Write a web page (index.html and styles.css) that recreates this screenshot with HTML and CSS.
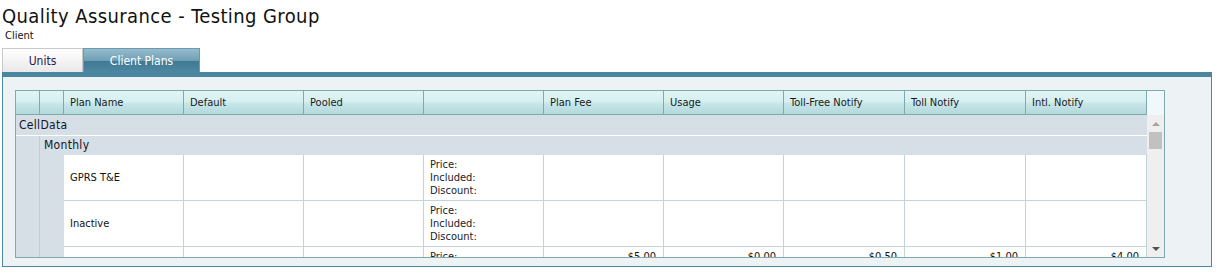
FILE: index.html
```html
<!DOCTYPE html>
<html>
<head>
<meta charset="utf-8">
<link rel="stylesheet" href="styles.css">
</head>
<body>
<h1 class="title">Quality Assurance - Testing Group</h1>
<div class="subtitle">Client</div>
<div class="tabs">
  <div class="tab">Units</div>
  <div class="tab active">Client Plans</div>
</div>
<div class="panel">
  <div class="grid">
    <div class="head">
      <div class="hcells">
        <div class="hc"></div>
        <div class="hc"></div>
        <div class="hc">Plan Name</div>
        <div class="hc">Default</div>
        <div class="hc">Pooled</div>
        <div class="hc"></div>
        <div class="hc">Plan Fee</div>
        <div class="hc">Usage</div>
        <div class="hc">Toll-Free Notify</div>
        <div class="hc">Toll Notify</div>
        <div class="hc">Intl. Notify</div>
      </div>
      <div class="hscroll"></div>
    </div>
    <div class="body">
      <div class="main">
        <div class="group g1">CellData</div>
        <div class="nest">
          <div class="indent i1"></div>
          <div class="nest-col">
            <div class="group g2">Monthly</div>
            <div class="nest">
              <div class="indent i2"></div>
              <div class="rows">
                <div class="row">
                  <div class="c name">GPRS T&amp;E</div>
                  <div class="c"></div>
                  <div class="c"></div>
                  <div class="c labels">Price:<br>Included:<br>Discount:</div>
                  <div class="c"></div>
                  <div class="c"></div>
                  <div class="c"></div>
                  <div class="c"></div>
                  <div class="c"></div>
                </div>
                <div class="row">
                  <div class="c name">Inactive</div>
                  <div class="c"></div>
                  <div class="c"></div>
                  <div class="c labels">Price:<br>Included:<br>Discount:</div>
                  <div class="c"></div>
                  <div class="c"></div>
                  <div class="c"></div>
                  <div class="c"></div>
                  <div class="c"></div>
                </div>
                <div class="row">
                  <div class="c name"></div>
                  <div class="c"></div>
                  <div class="c"></div>
                  <div class="c labels">Price:<br>Included:<br>Discount:</div>
                  <div class="c num">$5.00</div>
                  <div class="c num">$0.00</div>
                  <div class="c num">$0.50</div>
                  <div class="c num">$1.00</div>
                  <div class="c num">$4.00</div>
                </div>
              </div>
            </div>
          </div>
        </div>
      </div>
      <div class="vscroll">
        <div class="arrow up"></div>
        <div class="thumb"></div>
        <div class="spacer"></div>
        <div class="arrow down"></div>
      </div>
    </div>
  </div>
</div>
</body>
</html>
```

FILE: styles.css
```css
html, body {
  margin: 0;
  padding: 0;
  background: #ffffff;
}
body {
  font-family: "DejaVu Sans Condensed", "DejaVu Sans", sans-serif;
  font-stretch: condensed;
  color: #111;
  width: 1219px;
  height: 277px;
  overflow: hidden;
}
.title {
  margin: 4px 0 0 2px;
  font-size: 20px;
  font-weight: normal;
  line-height: 24px;
  letter-spacing: 0.4px;
  color: #111;
}
.subtitle {
  margin: 1px 0 0 5px;
  font-size: 11px;
  line-height: 13px;
  color: #111;
}
.tabs {
  display: flex;
  margin: 6px 0 0 2px;
  height: 24px;
}
.tab {
  box-sizing: border-box;
  width: 81px;
  height: 24px;
  border: 1px solid #c9c9c9;
  border-bottom: none;
  background: linear-gradient(#ffffff, #f4f4f4 50%, #e9e9e9);
  font-size: 12px;
  line-height: 24px;
  text-align: center;
  color: #2a2050;
}
.tab.active {
  width: 117px;
  border-color: #6b9ab0;
  background: linear-gradient(#97bccd, #6f9fb6 50%, #3f7994 52%, #4c86a1);
  color: #ffffff;
}
.panel {
  box-sizing: border-box;
  margin: 0 7px 0 2px;
  height: 195px;
  border: 1px solid #4d88a2;
  border-top: 5px solid #4b86a0;
  background: #edf2f5;
  padding: 13px 0 0 12px;
}
.grid {
  box-sizing: border-box;
  width: 1150px;
  height: 168px;
  border: 1px solid #80a9ae;
  background: #ffffff;
  display: flex;
  flex-direction: column;
}
.head {
  display: flex;
  height: 24px;
}
.hcells {
  display: grid;
  grid-template-columns: 24px 24px repeat(6, 120px) repeat(3, 121px);
  height: 24px;
  box-sizing: border-box;
  border-bottom: 1px solid #80a9ae;
  background: linear-gradient(#e1f4f5, #d6eff1 45%, #c6e6e8 55%, #b3d9dc);
}
.hc {
  box-sizing: border-box;
  border-right: 1px solid #80a9ae;
  font-size: 11px;
  line-height: 23px;
  padding-left: 6px;
  color: #1a1a1a;
  white-space: nowrap;
  overflow: hidden;
}
.hscroll {
  width: 17px;
  height: 24px;
  background: #f1f8fb;
}
.body {
  display: flex;
  height: 142px;
  overflow: hidden;
}
.main {
  width: 1131px;
  height: 142px;
  overflow: hidden;
  display: flex;
  flex-direction: column;
}
.group {
  background: #d5dfe5;
  font-size: 12px;
  letter-spacing: 0.3px;
  color: #141428;
  white-space: nowrap;
}
.g1 {
  height: 20px;
  line-height: 20px;
  padding-left: 3px;
  border-bottom: 1px solid #ffffff;
}
.g2 {
  height: 19px;
  line-height: 19px;
  padding-left: 4px;
}
.nest {
  display: flex;
  flex: 1;
}
.nest-col {
  display: flex;
  flex-direction: column;
  flex: 1;
}
.indent {
  box-sizing: border-box;
  width: 24px;
  flex: none;
  background: #d5dfe5;
}
.i1 {
  border-right: 1px solid #bfcdd6;
}
.rows {
  display: flex;
  flex-direction: column;
}
.row {
  display: grid;
  grid-template-columns: repeat(6, 120px) repeat(3, 121px);
  height: 46px;
  flex: none;
  box-sizing: border-box;
  border-bottom: 1px solid #c3d3da;
}
.c {
  box-sizing: border-box;
  border-right: 1px solid #c3d3da;
  font-size: 11px;
  color: #111;
  white-space: nowrap;
  overflow: hidden;
}
.name {
  display: flex;
  align-items: center;
  padding-left: 6px;
}
.labels {
  padding: 3px 0 0 6px;
  line-height: 13px;
  color: #1a1a2a;
}
.num {
  text-align: right;
  padding: 3px 7px 0 0;
  line-height: 13px;
}
.vscroll {
  width: 17px;
  height: 142px;
  background: #efefef;
  display: flex;
  flex-direction: column;
  align-items: center;
}
.arrow {
  width: 0;
  height: 0;
  border-left: 4px solid transparent;
  border-right: 4px solid transparent;
  flex: none;
}
.up {
  margin-top: 7px;
  border-bottom: 4px solid #a3a3a3;
}
.thumb {
  margin-top: 6px;
  width: 13px;
  height: 17px;
  background: #c1c1c1;
  flex: none;
}
.spacer {
  flex: 1;
}
.down {
  margin-bottom: 6px;
  border-top: 4px solid #505050;
}
```
